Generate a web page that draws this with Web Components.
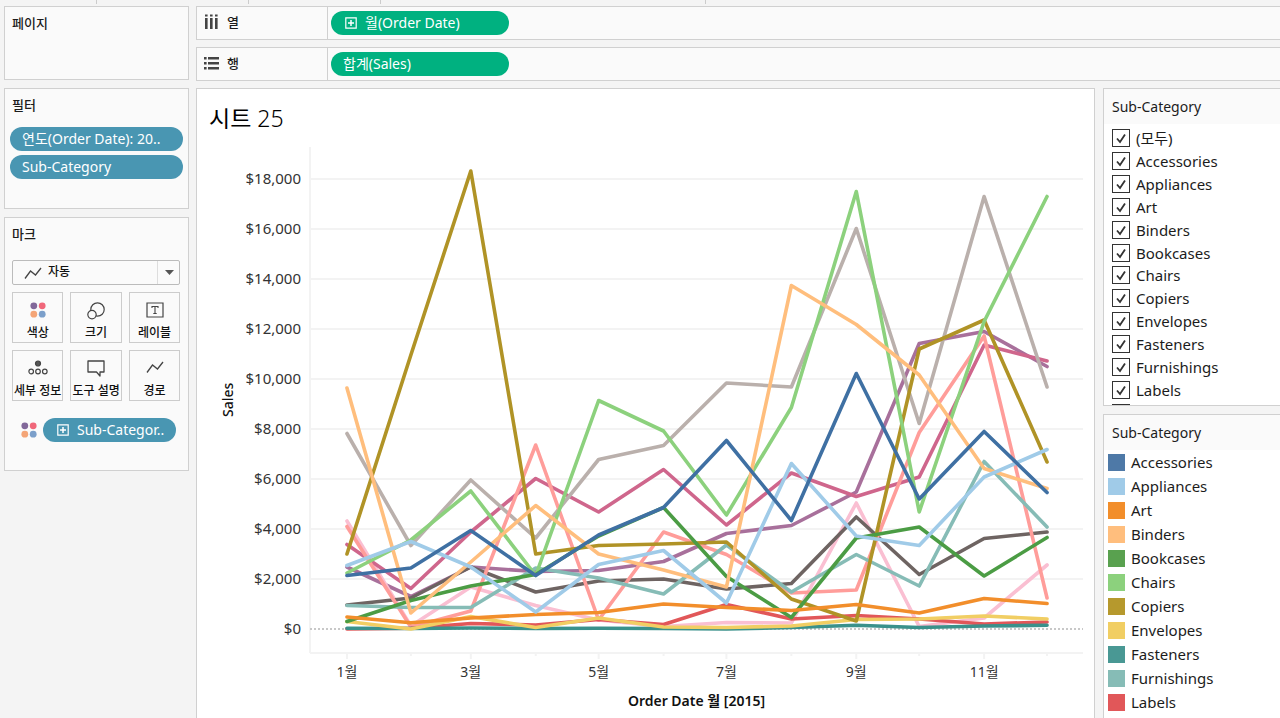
<!DOCTYPE html>
<html lang="ko">
<head>
<meta charset="utf-8">
<title>시트 25</title>
<style>
  body {
    margin: 0;
    background: #f4f4f4;
    color: #1c1c1c;
    font: 15px/20px "Noto Sans", "Noto Sans CJK KR", sans-serif;
  }
</style>
</head>
<body>
<viz-workbook></viz-workbook>

<script>
const MEMBERS = [
  ["Accessories", "#4e79a7", [2140,2440,3940,2140,3760,4860,7540,4340,10220,5200,7900,5460], "#3f70a3"],
  ["Appliances", "#a0cbe8", [2540,3500,2480,680,2580,3140,1040,6620,3720,3340,6080,7180]],
  ["Art", "#f28e2b", [480,252,440,580,660,1000,860,740,980,640,1220,1020]],
  ["Binders", "#ffbe7d", [9640,640,2680,4940,3000,2360,1680,13740,12180,10160,6420,5620]],
  ["Bookcases", "#59a14f", [300,1140,1720,2180,3720,4860,2100,460,3640,4080,2120,3660], "#4b9c44"],
  ["Chairs", "#8cd17d", [2240,3560,5520,2140,9140,7920,4560,8860,17500,4680,12300,17300]],
  ["Copiers", "#b6992d", [3000,10960,18320,3000,3340,3400,3480,1200,320,11200,12360,6680], "#b09326"],
  ["Envelopes", "#f1ce63", [300,0,500,60,440,80,60,120,380,400,520,400]],
  ["Fasteners", "#499894", [30,20,40,20,30,20,0,60,150,60,120,150], "#3a918b"],
  ["Furnishings", "#86bcb6", [940,860,860,2440,2040,1400,3360,1480,2980,1720,6700,4080]],
  ["Labels", "#e15759", [0,30,220,160,380,180,980,400,540,400,200,280]],
  ["Machines", "#ff9d9a", [4100,80,720,7360,360,3880,2980,1440,1560,7860,11720,1240]],
  ["Paper", "#79706e", [960,1240,2480,1480,1920,2000,1600,1820,4480,2180,3620,3880], "#6e6462"],
  ["Phones", "#bab0ac", [7820,3340,5960,3640,6780,7340,9840,9680,16020,8220,17300,9680]],
  ["Storage", "#d37295", [3380,1620,3880,6020,4680,6380,4160,6240,5300,6080,11360,10720], "#cf668c"],
  ["Supplies", "#fabfd2", [4320,120,1680,940,360,100,260,240,5040,100,440,2560]],
  ["Tables", "#b07aa1", [2480,1300,2480,2300,2340,2700,3820,4140,5480,11420,11900,10500], "#a8709b"]
];

const ICONS = {
  columns: `<svg width="15" height="16" viewBox="0 0 15 16" fill="#444"><path d="M1 .6h2.600v2H1zM6 .6h2.600v2H6zM11 .6h2.600v2H11zM1 4h2.600v11H1zM6 4h2.600v11H6zM11 4h2.600v11H11z"/></svg>`,
  rows: `<svg width="15" height="16" viewBox="0 0 15 16" fill="#444"><path d="M0 2h2.600v2.400H0zM0 7h2.600v2.400H0zM0 12h2.600v2.400H0zM4 2h11v2.400H4zM4 7h11v2.400H4zM4 12h11v2.400H4z"/></svg>`,
  plus: `<svg width="12" height="12" viewBox="0 0 12 12" fill="none" stroke="#fff"><path d="M.8.8h10.4v10.4H.8z" stroke-width="1.2"/><path d="M6 3v6M3 6h6" stroke-width="1.5"/></svg>`,
  color: `<svg width="16" height="16" viewBox="0 0 16 16"><circle cx="3.8" cy="3.8" r="3.4" fill="#82689a"/><circle cx="12.2" cy="3.8" r="3.4" fill="#f0677a"/><circle cx="3.8" cy="12.2" r="3.4" fill="#f4a577"/><circle cx="12.2" cy="12.2" r="3.4" fill="#7b9fca"/></svg>`,
  size: `<svg width="18" height="18" viewBox="0 0 18 18" fill="none" stroke="#444" stroke-width="1.2"><circle cx="10.5" cy="7.5" r="6.7"/><circle cx="5" cy="12.6" r="4.2" fill="#fafafa"/></svg>`,
  label: `<svg width="18" height="16" viewBox="0 0 18 16" fill="none" stroke="#444" stroke-width="1.2"><path d="M1 1h16v14H1z"/><path d="M6 6V4.5h6V6M9 4.5v7M7.3 11.5h3.4" stroke-width="1.1"/></svg>`,
  detail: `<svg width="20" height="16" viewBox="0 0 20 16" fill="none" stroke="#444" stroke-width="1.2"><circle cx="10" cy="3.500" r="2.500" fill="#555"/><circle cx="3.2" cy="11.5" r="2.300"/><circle cx="10" cy="11.5" r="2.300"/><circle cx="16.8" cy="11.5" r="2.300"/></svg>`,
  tooltip: `<svg width="18" height="18" viewBox="0 0 18 18" fill="none" stroke="#444" stroke-width="1.3" stroke-linejoin="round"><path d="M1 1h16v11h-4v4L9.500 12H1z"/></svg>`,
  path: `<svg width="18" height="14" viewBox="0 0 18 14" fill="none" stroke="#444" stroke-width="1.3"><path d="M1 12.500 6.500 5l5 4L17 2"/></svg>`
};

function define(name, render) {
  customElements.define(name, class extends HTMLElement {
    constructor() {
      super();
      this.attachShadow({ mode: "open" });
    }
    connectedCallback() {
      const t = document.createElement("template");
      t.innerHTML = `<style>*{box-sizing:border-box}svg{display:block;flex:none}</style>` + render(this);
      this.shadowRoot.replaceChildren(t.content.cloneNode(true));
    }
  });
}

/* A field pill: blue for dimensions, green for continuous fields. */
define("viz-pill", el => `
  <style>
    :host { display: block; }
    button {
      display: flex; align-items: center; gap: 8px;
      width: 100%; height: 24px; padding: 0 12px; border: 0; border-radius: 12px;
      background: #4996b2; color: #fff; font: inherit; font-size: 14px; white-space: nowrap; overflow: hidden;
    }
    :host([expandable]) button { padding-left: 14px; }
    :host([measure]) button { background: #00b180; }
  </style>
  <button type="button">${el.hasAttribute("expandable") ? ICONS.plus : ""}<span><slot></slot></span></button>`);

/* A titled card in the left column. */
define("viz-card", el => `
  <style>
    :host { display: block; box-sizing: border-box; border: 1px solid #d0d0d0; background: #fafafa; padding: 6px 5px; }
    h2 { margin: 0 0 12px; padding: 0 2px; font: 500 13px/20px "Noto Sans", "Noto Sans CJK KR", sans-serif; }
    .stack { display: grid; gap: 4px; }
  </style>
  <h2>${el.getAttribute("heading")}</h2>
  <div class="stack"><slot></slot></div>`);

/* One of the six encodings of the marks card. */
define("viz-mark-button", el => `
  <style>
    :host { display: block; }
    button {
      display: flex; flex-direction: column; align-items: center; justify-content: space-between;
      width: 100%; height: 51px; padding: 9px 0 0; border: 1px solid #ccc; background: #fafafa;
      color: #111; font: 500 12px/18px "Noto Sans", "Noto Sans CJK KR", sans-serif; white-space: nowrap;
    }
  </style>
  <button type="button">${ICONS[el.getAttribute("icon")]}<span><slot></slot></span></button>`);

define("viz-marks", () => `
  <style>
    :host { display: block; padding: 4px 3px 0 2px; }
    .type { display: grid; align-items: center; margin-bottom: 7px; }
    .type > * { grid-area: 1 / 1; }
    select {
      appearance: none; width: 100%; height: 25px; padding: 0 0 2px 35px;
      border: 1px solid #bbb; border-radius: 2px; background: #fafafa; color: #111;
      font: 500 12px/18px "Noto Sans", "Noto Sans CJK KR", sans-serif;
    }
    .line { margin-left: 12px; pointer-events: none; z-index: 1; }
    .arrow { justify-self: end; display: grid; place-items: center; width: 23px; height: 23px; border-left: 1px solid #ddd; pointer-events: none; z-index: 1; }
    .buttons { display: grid; grid-template-columns: repeat(3, minmax(0, 1fr)); gap: 7px; }
    .assigned { display: flex; align-items: center; gap: 6px; padding: 17px 4px 0 9px; }
    viz-pill { flex: 1; min-width: 0; }
  </style>
  <div class="type">
    <select aria-label="마크 유형"><option>자동</option></select>
    <span class="line">${ICONS.path}</span>
    <span class="arrow"><svg width="9" height="5" viewBox="0 0 9 5"><path d="M0 0h9L4.500 5z" fill="#555"/></svg></span>
  </div>
  <div class="buttons">
    <viz-mark-button icon="color">색상</viz-mark-button>
    <viz-mark-button icon="size">크기</viz-mark-button>
    <viz-mark-button icon="label">레이블</viz-mark-button>
    <viz-mark-button icon="detail">세부 정보</viz-mark-button>
    <viz-mark-button icon="tooltip">도구 설명</viz-mark-button>
    <viz-mark-button icon="path">경로</viz-mark-button>
  </div>
  <div class="assigned">${ICONS.color}<viz-pill expandable>Sub-Categor..</viz-pill></div>`);

/* Column and row shelves above the sheet. */
define("viz-shelf", el => `
  <style>
    :host { display: flex; box-sizing: border-box; height: 34px; border: 1px solid #d0d0d0; border-right: 0; background: #fafafa; }
    .name { display: flex; align-items: center; gap: 8px; width: 131px; padding: 0 0 3px 7px; border-right: 1px solid #d0d0d0;
      font: 500 13px/20px "Noto Sans", "Noto Sans CJK KR", sans-serif; }
    .drop { display: flex; align-items: center; padding-left: 3px; }
    ::slotted(viz-pill) { width: 178px; }
  </style>
  <div class="name">${ICONS[el.getAttribute("icon")]}<span>${el.getAttribute("heading")}</span></div>
  <div class="drop"><slot></slot></div>`);

define("viz-chart", () => {
  /* Plot area: 774 units wide, 510 high; 25 units per $1,000, zero at 482. */
  const days = [37, 101, 161, 226, 289, 354, 417, 482, 547, 610, 675, 738];
  const y = v => 482 - v / 40;
  const pct = x => (x / 774 * 100).toFixed(3) + "%";
  const lines = [...MEMBERS].reverse().map(([, color, values, stroke]) =>
    `<polyline stroke="${stroke || color}" points="${values.map((v, i) => days[i] + "," + y(v)).join(" ")}"/>`).join("");
  let grid = "", labels = "";
  for (let v = 18000; v >= 0; v -= 2000) {
    labels += `<span>$${v.toLocaleString("en-US")}</span>`;
    if (v) grid += `<line x1="0" x2="100%" y1="${y(v)}" y2="${y(v)}"/>`;
  }
  const ticks = days.map((d, i) => `<line x1="${pct(d)}" x2="${pct(d)}" y1="506" y2="${i % 2 ? 509 : 512}"/>`).join("");
  const months = [0, 2, 4, 6, 8, 10].map(i => `<text x="${pct(days[i])}" y="530">${i + 1}월</text>`).join("");
  return `
  <style>
    :host { display: grid; grid-template-columns: 34px 72px 1fr; color: #333; font-size: 15px; }
    .ytitle { height: 506px; justify-self: end; text-align: center; writing-mode: vertical-rl; transform: rotate(180deg); font-size: 14px; font-weight: 500; color: #111; }
    .ylabels { display: grid; grid-auto-rows: 50px; align-items: center; justify-items: end; padding: 6px 9px 0 0; }
    .plot { width: 100%; height: 544px; overflow: visible; }
    .rule { stroke: #f3f3f3; stroke-width: 2; }
    .zero { stroke: #c8c8c8; stroke-width: 2; stroke-dasharray: 2 2; }
    polyline { fill: none; stroke-linecap: round; stroke-linejoin: round; vector-effect: non-scaling-stroke; }
    text { fill: #333; text-anchor: middle; font-size: 14px; }
    .xtitle { grid-column: 3; text-align: center; font-size: 14px; font-weight: 600; color: #111; }
  </style>
  <div class="ytitle">Sales</div>
  <div class="ylabels">${labels}</div>
  <svg class="plot" role="img" aria-label="Sales">
    <g class="rule">${grid}<line x1="0" x2="0" y1="0" y2="506"/><line x1="0" x2="100%" y1="506" y2="506"/>${ticks}</g>
    <line class="zero" x1="0" x2="100%" y1="482" y2="482"/>
    <svg width="100%" height="510" viewBox="0 0 774 510" preserveAspectRatio="none" overflow="visible" stroke-width="3.6">${lines}</svg>
    ${months}
  </svg>
  <div class="xtitle">Order Date 월 [2015]</div>`;
});

define("viz-sheet", () => `
  <style>
    :host { display: block; box-sizing: border-box; border: 1px solid #d0d0d0; border-bottom: 0; background: #fff; padding: 14px 11px 0 12px; }
    h1 { margin: 0 0 14px; font: 400 23px/30px "Noto Sans", "Noto Sans CJK KR", sans-serif; color: #000; }
    h1 span { font-weight: 300; }
    viz-chart { margin-left: -5px; }
  </style>
  <h1>시트 <span>25</span></h1>
  <viz-chart></viz-chart>`);

/* Panel frame of the right column. */
define("viz-panel", el => `
  <style>
    :host { display: block; box-sizing: border-box; border: 1px solid #d0d0d0; border-right: 0; background: #fff; overflow: hidden; }
    h2 { margin: 0; padding: 0 8px; background: #fafafa; font-size: 14px; font-weight: 400; line-height: 35px; }
  </style>
  <h2>${el.getAttribute("heading")}</h2>
  <slot></slot>`);

define("viz-filter", () => `
  <style>
    :host { display: block; height: 281px; padding: 3px 8px 0; overflow: hidden; box-sizing: border-box; }
    .list { display: grid; grid-auto-rows: 1fr; height: 297px; }
    label { display: flex; align-items: center; gap: 6px; }
    input {
      appearance: none; flex: none; width: 18px; height: 18px; margin: 0; border: 1px solid #333; background: #fff;
    }
    input:checked {
      background: #fff url("data:image/svg+xml,%3Csvg xmlns='http://www.w3.org/2000/svg' viewBox='0 0 16 16'%3E%3Cpath d='M4 8.500 7 12 12 4.500' fill='none' stroke='%23333' stroke-width='1.800'/%3E%3C/svg%3E") center / 16px 16px;
    }
  </style>
  <div class="list">
  ${["(모두)", ...MEMBERS.slice(0, 11).map(m => m[0])].map(n => `<label><input type="checkbox" checked>${n}</label>`).join("")}
  <label><input type="checkbox" checked aria-label="${MEMBERS[11][0]}"></label>
  </div>`);

define("viz-legend", () => `
  <style>
    :host { display: block; }
    ul { margin: 0; padding: 0 4px; list-style: none; }
    li { display: flex; align-items: center; gap: 6px; height: 24px; }
    i { width: 17px; height: 17px; }
  </style>
  <ul>${MEMBERS.slice(0, 11).map(([n, c]) => `<li><i style="background:${c}"></i>${n}</li>`).join("")}</ul>`);

define("viz-workbook", () => `
  <style>
    :host { display: flex; flex-direction: column; min-height: 100vh; }
    .toolbar { display: flex; height: 4px; margin-bottom: 2px; }
    .toolbar span { border-right: 1px solid #ccc; }
    .toolbar span:nth-child(1) { flex: 0 0 97px; }
    .toolbar span:nth-child(2) { flex: 0 0 152px; }
    .toolbar span:nth-child(3) { flex: 0 0 132px; }
    .toolbar span:nth-child(4) { flex: 0 0 325px; }
    .work { flex: 1; display: grid; grid-template-columns: 185px minmax(0, 1fr); gap: 7px; padding-left: 4px; }
    .side { display: flex; flex-direction: column; gap: 8px; }
    .pages { height: 74px; }
    .filters { height: 121px; }
    .marks { height: 254px; }
    .main { display: flex; flex-direction: column; gap: 7px; }
    .canvas { flex: 1; display: grid; grid-template-columns: minmax(0, 1fr) 177px; gap: 8px; }
    .right { display: flex; flex-direction: column; gap: 8px; }
    .right viz-panel:last-child { flex: 1; border-bottom: 0; }
  </style>
  <div class="toolbar"><span></span><span></span><span></span><span></span></div>
  <div class="work">
    <div class="side">
      <viz-card class="pages" heading="페이지"></viz-card>
      <viz-card class="filters" heading="필터">
        <viz-pill>연도(Order Date): 20..</viz-pill>
        <viz-pill>Sub-Category</viz-pill>
      </viz-card>
      <viz-card class="marks" heading="마크"><viz-marks></viz-marks></viz-card>
    </div>
    <div class="main">
      <viz-shelf icon="columns" heading="열"><viz-pill measure expandable>월(Order Date)</viz-pill></viz-shelf>
      <viz-shelf icon="rows" heading="행"><viz-pill measure>합계(Sales)</viz-pill></viz-shelf>
      <div class="canvas">
        <viz-sheet></viz-sheet>
        <div class="right">
          <viz-panel heading="Sub-Category"><viz-filter></viz-filter></viz-panel>
          <viz-panel heading="Sub-Category"><viz-legend></viz-legend></viz-panel>
        </div>
      </div>
    </div>
  </div>`);
</script>
</body>
</html>
